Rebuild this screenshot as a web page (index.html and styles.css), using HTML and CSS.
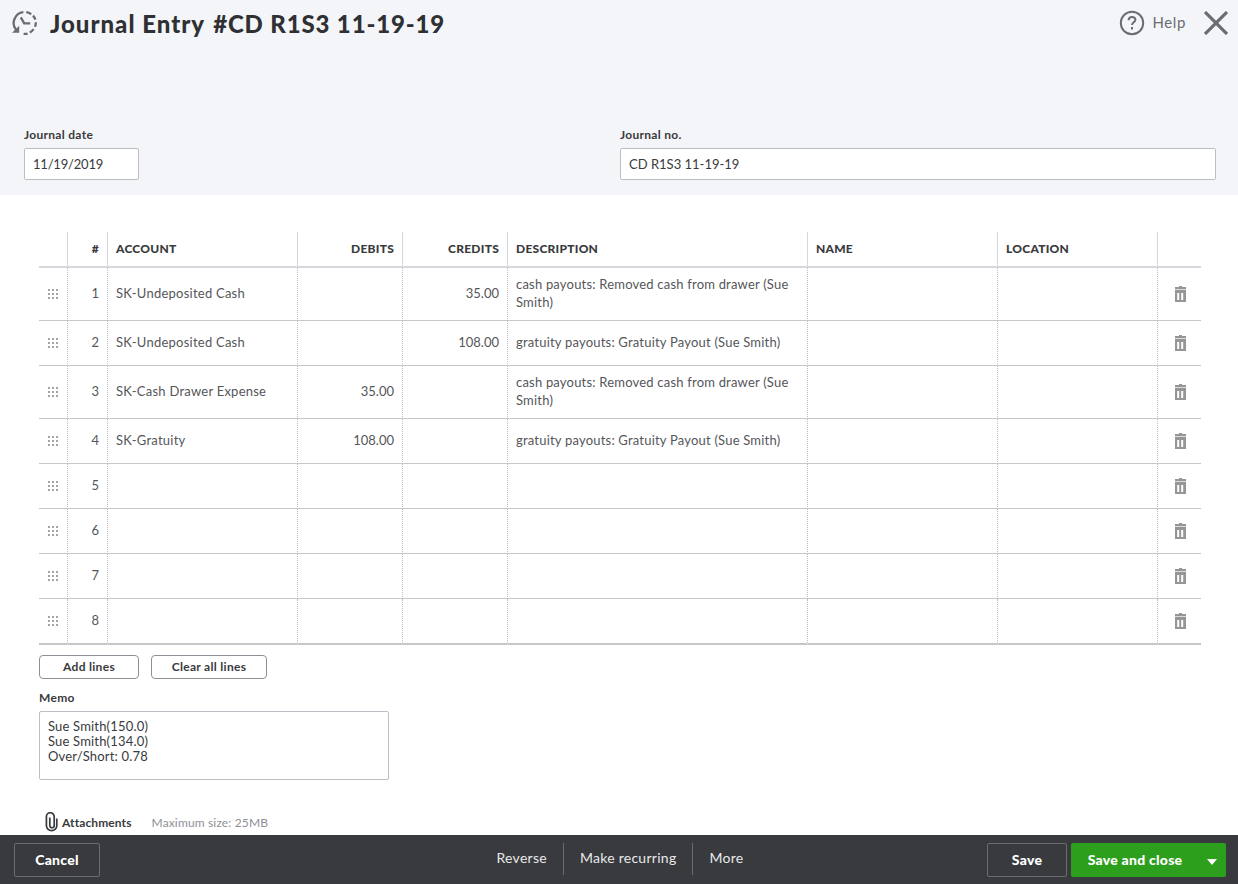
FILE: index.html
```html
<!DOCTYPE html>
<html lang="en">
<head>
<meta charset="UTF-8" />
<meta name="viewport" content="width=device-width, initial-scale=1" />
<title>Journal Entry</title>
<link rel="stylesheet" href="styles.css">
</head>
<body>
  <svg class="sprite" aria-hidden="true">
    <symbol id="grip" viewBox="0 0 10 10">
      <path d="M0 0h2v2H0zM4 0h2v2H4zM8 0h2v2H8zM0 4h2v2H0zM4 4h2v2H4zM8 4h2v2H8zM0 8h2v2H0zM4 8h2v2H4zM8 8h2v2H8z" />
    </symbol>
    <symbol id="trash" viewBox="0 0 11 16">
      <path fill-rule="evenodd" d="M4 0h3v1h4v2H0V1h4zM0 4h11v12H0zM2.2 7v7h2V7zM6.2 7v7h2V7z" />
      <path opacity=".35" d="M0 3h11v1H0z" />
    </symbol>
  </svg>

  <div class="page">
    <header class="header">
      <div class="title-bar">
        <svg class="history-icon" viewBox="0 0 26 26">
          <path d="M11.4 2.2A10.9 10.9 0 0 0 4.2 20M14.2 2.2a10.9 10.9 0 0 1 5 2M21 5.6a10.9 10.9 0 0 1 2.4 4M23.8 12.2a10.9 10.9 0 0 1-.8 4.6M21.6 19.2a10.9 10.9 0 0 1-3.8 3.3M15.6 23.6a10.9 10.9 0 0 1-4 .2" />
          <path class="head" d="M0 22.8h7.2v-7z" />
          <path d="M8.8 7.4l3.4 6h6" />
        </svg>
        <h1 class="title">Journal Entry <span class="number">#CD R1S3 11-19-19</span></h1>
        <button class="help">
          <svg class="help-icon" viewBox="0 0 26 26">
            <circle cx="13" cy="13" r="11.2" />
            <path d="M9.6 10.3c0-4.6 6.8-4.3 6.8-.5 0 2.4-3.4 2.6-3.4 5.2" />
            <path d="M13 17v2.4" />
          </svg>
          <span>Help</span>
        </button>
        <button class="close" aria-label="Close">
          <svg viewBox="0 0 24 24"><path d="M1 1l22 22M23 1L1 23" /></svg>
        </button>
      </div>
      <div class="fields">
        <div class="field">
          <label class="label" for="date">Journal date</label>
          <input class="input date" id="date" value="11/19/2019">
        </div>
        <div class="field">
          <label class="label" for="number">Journal no.</label>
          <input class="input" id="number" value="CD R1S3 11-19-19">
        </div>
      </div>
    </header>

    <main class="content">
      <table class="lines">
        <colgroup>
          <col class="col-grip"><col class="col-num"><col class="col-account">
          <col class="col-amount"><col class="col-amount"><col class="col-desc">
          <col class="col-name"><col class="col-location"><col class="col-trash">
        </colgroup>
        <thead>
          <tr>
            <th></th><th class="right">#</th><th>ACCOUNT</th><th class="right">DEBITS</th><th class="right">CREDITS</th>
            <th>DESCRIPTION</th><th>NAME</th><th>LOCATION</th><th></th>
          </tr>
        </thead>
        <tbody>
          <tr class="tall">
            <td><svg class="grip"><use href="#grip" /></svg></td><td class="right">1</td><td>SK-Undeposited Cash</td>
            <td class="right"></td><td class="right">35.00</td>
            <td class="desc">cash payouts: Removed cash from drawer (Sue Smith)</td><td></td><td></td>
            <td><svg class="trash"><use href="#trash" /></svg></td>
          </tr>
          <tr>
            <td><svg class="grip"><use href="#grip" /></svg></td><td class="right">2</td><td>SK-Undeposited Cash</td>
            <td class="right"></td><td class="right">108.00</td>
            <td class="desc">gratuity payouts: Gratuity Payout (Sue Smith)</td><td></td><td></td>
            <td><svg class="trash"><use href="#trash" /></svg></td>
          </tr>
          <tr class="tall">
            <td><svg class="grip"><use href="#grip" /></svg></td><td class="right">3</td><td>SK-Cash Drawer Expense</td>
            <td class="right">35.00</td><td class="right"></td>
            <td class="desc">cash payouts: Removed cash from drawer (Sue Smith)</td><td></td><td></td>
            <td><svg class="trash"><use href="#trash" /></svg></td>
          </tr>
          <tr>
            <td><svg class="grip"><use href="#grip" /></svg></td><td class="right">4</td><td>SK-Gratuity</td>
            <td class="right">108.00</td><td class="right"></td>
            <td class="desc">gratuity payouts: Gratuity Payout (Sue Smith)</td><td></td><td></td>
            <td><svg class="trash"><use href="#trash" /></svg></td>
          </tr>
          <tr>
            <td><svg class="grip"><use href="#grip" /></svg></td><td class="right">5</td>
            <td></td><td></td><td></td><td></td><td></td><td></td>
            <td><svg class="trash"><use href="#trash" /></svg></td>
          </tr>
          <tr>
            <td><svg class="grip"><use href="#grip" /></svg></td><td class="right">6</td>
            <td></td><td></td><td></td><td></td><td></td><td></td>
            <td><svg class="trash"><use href="#trash" /></svg></td>
          </tr>
          <tr>
            <td><svg class="grip"><use href="#grip" /></svg></td><td class="right">7</td>
            <td></td><td></td><td></td><td></td><td></td><td></td>
            <td><svg class="trash"><use href="#trash" /></svg></td>
          </tr>
          <tr>
            <td><svg class="grip"><use href="#grip" /></svg></td><td class="right">8</td>
            <td></td><td></td><td></td><td></td><td></td><td></td>
            <td><svg class="trash"><use href="#trash" /></svg></td>
          </tr>
        </tbody>
      </table>

      <div class="line-actions">
        <button class="small-btn add">Add lines</button>
        <button class="small-btn clear">Clear all lines</button>
      </div>

      <label class="label" for="memo">Memo</label>
      <textarea class="memo" id="memo">Sue Smith(150.0)
Sue Smith(134.0)
Over/Short: 0.78</textarea>

      <div class="attachments">
        <svg class="clip" viewBox="0 0 13 20">
          <path d="M9.2 5v8.6a2.2 2.2 0 0 1-4.4 0V5.5M9.2 5.5V4.6a3.9 3.9 0 0 0-7.8 0v8.8a5.2 5.2 0 0 0 10.4 0V6.5" />
        </svg>
        <span class="label">Attachments</span>
        <span class="max-size">Maximum size: 25MB</span>
      </div>
    </main>

    <footer class="footer">
      <div class="side">
        <button class="btn cancel">Cancel</button>
      </div>
      <nav class="links">
        <a class="reverse">Reverse</a>
        <a class="recurring">Make recurring</a>
        <a class="more">More</a>
      </nav>
      <div class="side end">
        <button class="btn save">Save</button>
        <div class="split">
          <button class="btn primary">Save and close</button>
          <button class="btn arrow" aria-label="More save options"><svg viewBox="0 0 10 6"><path d="M0 0h10L5 6z" /></svg></button>
        </div>
      </div>
    </footer>
  </div>
</body>
</html>
```
FILE: styles.css
```css
* {
  box-sizing: border-box;
}

body {
  margin: 0;
  background: #fff;
  color: #393a3d;
  font-family: Lato, "Liberation Sans", sans-serif;
  font-size: 13px;
}
button, input, textarea {
  font: inherit;
  color: inherit;
  letter-spacing: inherit;
}
button {
  border: none;
  background: none;
  padding: 0;
  cursor: pointer;
}
.sprite {
  display: none;
}
.page {
  height: 884px;
  display: flex;
  flex-direction: column;
  overflow: hidden;
}

/* Header */
.header {
  flex: none;
  height: 195px;
  background: #f4f5f8;
  display: flex;
  flex-direction: column;
  justify-content: space-between;
  padding-bottom: 15px;
}
.title-bar {
  height: 46px;
  padding: 0 10px 0 12px;
  display: flex;
  align-items: center;
}
.history-icon {
  width: 26px;
  height: 26px;
  fill: none;
  stroke: #6b6c72;
  stroke-width: 2.3;
}
.history-icon .head {
  fill: #6b6c72;
  stroke: none;
}
.title {
  margin: 1px auto 0 12px;
  font-size: 24px;
  font-weight: 900;
  line-height: 30px;
  letter-spacing: 1px;
  white-space: nowrap;
  color: #2f3033;
}
.title .number {
  margin-left: 2px;
  letter-spacing: 0.85px;
}
.help {
  display: flex;
  align-items: center;
  gap: 8px;
  font-size: 15px;
  letter-spacing: 0.6px;
  color: #6b6c72;
}
.help-icon {
  width: 26px;
  height: 26px;
  fill: none;
  stroke: #6b6c72;
  stroke-width: 2;
}
.help span {
  margin-top: -2px;
}
.close {
  margin-left: 18px;
}
.close svg {
  display: block;
  width: 24px;
  height: 24px;
  stroke: #6b6c72;
  stroke-width: 3.2;
}
.fields {
  display: grid;
  grid-template-columns: 596px 596px;
  padding-left: 24px;
}
.label {
  display: block;
  font-size: 12px;
  font-weight: 700;
  line-height: 16px;
  letter-spacing: 0.3px;
}
.input {
  display: block;
  width: 100%;
  height: 32px;
  margin-top: 5px;
  padding: 0 8px;
  border: 1px solid #babec5;
  border-radius: 2px;
  background: #fff;
  letter-spacing: 0;
}
.input.date {
  width: 115px;
  letter-spacing: -0.2px;
}

/* Lines table */
.content {
  flex: 1;
  min-height: 0;
  padding: 37px 37px 0 39px;
}
.lines {
  width: 1162px;
  table-layout: fixed;
  border-collapse: separate;
  border-spacing: 0;
}
.col-grip { width: 29px; }
.col-num { width: 40px; }
.col-account { width: 190px; }
.col-amount { width: 105px; }
.col-desc { width: 300px; }
.col-name { width: 190px; }
.col-location { width: 160px; }
.col-trash { width: 43px; }
.lines th {
  height: 36px;
  padding: 0 8px 2px;
  border-right: 1px solid #d4d7dc;
  border-bottom: 2px solid #d4d7dc;
  text-align: left;
  font-size: 12px;
  font-weight: 900;
  letter-spacing: 0.25px;
}
.lines td {
  height: 45px;
  padding: 0 8px 2px;
  border-right: 1px dotted #babec5;
  border-bottom: 1px solid #c7c7c7;
  line-height: 18px;
  letter-spacing: 0.24px;
  color: #55565a;
}
.lines .tall td {
  height: 53px;
}
.lines tr:last-child td {
  height: 46px;
  border-bottom-width: 2px;
}
.lines th:last-child,
.lines td:last-child {
  border-right: none;
}
.lines .right {
  text-align: right;
}
.lines td.right {
  letter-spacing: 0;
}
.lines td.desc {
  padding-right: 4px;
  letter-spacing: 0.2px;
}
.grip {
  display: block;
  width: 10px;
  height: 10px;
  margin: 2px 0 0 1px;
  fill: #a3a4a8;
}
.trash {
  display: block;
  width: 11px;
  height: 16px;
  margin: 2px 0 0 9px;
  fill: #969696;
}

/* Below the table */
.line-actions {
  display: flex;
  gap: 12px;
  margin: 10px 0 11px;
}
.small-btn {
  height: 24px;
  padding-bottom: 2px;
  border: 1px solid #8d9096;
  border-radius: 4px;
  font-size: 12px;
  font-weight: 700;
  letter-spacing: 0.3px;
}
.small-btn.add { width: 100px; }
.small-btn.clear { width: 116px; }
.memo {
  display: block;
  width: 350px;
  height: 69px;
  margin-top: 5px;
  padding: 7px 8px;
  border: 1px solid #babec5;
  border-radius: 2px;
  resize: none;
  line-height: 15px;
  letter-spacing: 0.18px;
}
.attachments {
  display: flex;
  align-items: center;
  margin-top: 32px;
  padding-left: 6px;
}
.attachments .label {
  margin-top: 2px;
  letter-spacing: 0.1px;
}
.clip {
  width: 13px;
  height: 20px;
  margin-right: 4px;
  fill: none;
  stroke: #393a3d;
  stroke-width: 1.7;
}
.max-size {
  margin-left: 20px;
  font-size: 12px;
  letter-spacing: 0.15px;
  color: #8d9096;
}

/* Footer */
.footer {
  flex: none;
  height: 49px;
  padding: 0 12px 0 14px;
  background: #393a3d;
  color: #fff;
  display: grid;
  grid-template-columns: 1fr auto 1fr;
}
.side {
  display: flex;
  align-items: center;
  padding-top: 1px;
}
.side.end {
  justify-content: flex-end;
  gap: 4px;
}
.btn {
  height: 34px;
  padding-bottom: 2px;
  border: 1px solid #6b6c72;
  border-radius: 2px;
  font-size: 14px;
  font-weight: 900;
  letter-spacing: 0.25px;
}
.cancel { width: 86px; }
.save { width: 80px; }
.split {
  display: flex;
  border-radius: 2px;
  background: #2ca01c;
}
.split .btn {
  border: none;
}
.primary { width: 128px; }
.arrow {
  width: 27px;
}
.arrow svg {
  width: 10px;
  height: 6px;
  margin-right: 2px;
  fill: #fff;
}
.links {
  display: flex;
  padding: 8px 0 9px;
  font-size: 14px;
  line-height: 30px;
  letter-spacing: 0.27px;
  color: #e8e9eb;
}
.links a {
  padding: 0 16px;
}
.links a + a {
  border-left: 1px solid #6b6c72;
}
```
